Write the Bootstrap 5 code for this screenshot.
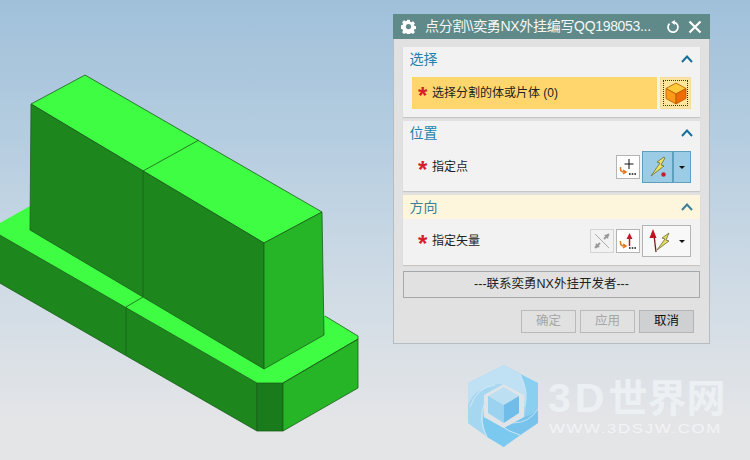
<!doctype html>
<html lang="zh">
<head>
<meta charset="utf-8">
<title>点分割</title>
<link rel="stylesheet" href="https://cdn.jsdelivr.net/npm/bootstrap@5.3.0/dist/css/bootstrap.min.css">
<style>
html,body{margin:0;height:460px;overflow:hidden}
body{font-family:"Liberation Sans","Noto Sans CJK SC",sans-serif;font-size:12px;color:#222}
.desk{position:relative;width:750px;height:460px;overflow:hidden;background:linear-gradient(180deg,#a0c0da 0%,#b5cde0 30%,#cfdbe5 62%,#e4e5e7 92%,#e4e5e7 100%)}
.scene{position:absolute;left:0;top:0}
.mark-logo{position:absolute;left:467px;top:365px}
.mark-big{position:absolute;left:548px;top:376px;font-size:39px;line-height:44px;font-weight:700;color:#edf0f3;white-space:nowrap}
.mark-num{font-size:41px;letter-spacing:4px}
.mark-small{position:absolute;left:549px;top:422px;font-size:12px;line-height:14px;color:#f2f4f6;letter-spacing:1.2px;white-space:nowrap;transform:scaleX(1.4);transform-origin:left center}
.dlg{position:absolute;left:393px;top:14px;width:317px;height:330px;background:#e1e1e1;border:1px solid #b6bcc0;border-top:0}
.dlg-title{height:25px;margin:0 -1px;background:#5f8a89;color:#fff;padding:0 8px}
.dlg-name{font-size:14px;margin-left:9px;flex:1;white-space:nowrap;letter-spacing:-.32px;color:#f4f7f7}
.sect{margin:8px 9px 0;background:#f2f2f2;box-shadow:0 1px 1px #c6c6c6}
.sect+.sect{margin-top:4px}
.sect-head{height:24px;padding:0 7px 0 6.500px;color:#1f83ad;font-size:14px}
.sect-head.cream{background:#fdf6dc;color:#3d7f96}
.row-sel{padding:6px 9px 8px;gap:3px}
.row-hi{background:#ffd66e;height:32px;flex:1;padding-left:7px}
.row-plain{height:46px;padding:0 9px 2px 16px}
.req{color:#d42027;font-size:24px;line-height:17px;font-weight:700;width:13px;display:inline-block;height:13px;margin-left:-1px;margin-right:1px}
.pick{width:31px;height:32px;background:#fbe3a4;border:1px solid #f5dc9c;padding:2px}
.pick-in{width:100%;height:100%;border:1px dotted #333;background:#ffe49a}
.tool{width:24px;height:24px;background:#fff;border:1px solid #b4b4b4;margin-right:2px}
.tool.off{background:#f2f2f2;border-color:#d4d4d4}
.split{height:32px;border:1px solid #b4b4b4;background:#f8f8f8;width:49px}
.split.on{background:#9ccbe6;border-color:#5d9fbd}
.split-l{width:31px;height:100%}
.split.on .split-l{border-right:2px solid #5d9fbd}
.split-r{flex:1;height:100%}
.caret-d{width:0;height:0;border-left:3.5px solid transparent;border-right:3.5px solid transparent;border-top:3.5px solid #111}
.wide{margin:6px 9px 0;height:27px;border:1px solid #a5a8aa;background:#e1e1e1;font-size:12.5px;color:#222;line-height:25px;text-align:center}
.acts{margin:12px 15px 0 0;gap:4px}
.btn.act{width:55px;height:23px;padding:0;border-radius:0;font-size:12.5px;line-height:21px;background:#e1e1e1;border:1px solid #adadad;color:#111}
.btn.act.dim{color:#a6a6a6;border-color:#b9b9b9}
.btn.act.main{background:#cfd0d2;border-color:#b4b5b7}
</style>
</head>
<body>
<div class="desk">
  <svg class="scene" width="390" height="460" viewBox="0 0 390 460">
    <g stroke="#1b5f1b" stroke-width=".8" stroke-linejoin="round">
      <polygon points="-2,224 30,206 143,290 325,316 358,336 358,339 283,383 257,383 -2,235" fill="#3efd42" stroke="none"/>
      <polygon points="-2,234 257,383 257,431 -2,282" fill="#1d861d"/>
      <polygon points="257,383 283,383 283,431 257,431" fill="#1a7b1c"/>
      <polygon points="283,383 358,339 358,388 283,431" fill="#26b526"/>
      <line x1="358" y1="336" x2="358" y2="339"/>
      <line x1="325" y1="316" x2="358" y2="336"/>
      <line x1="283" y1="383" x2="358" y2="339"/>
      <line x1="143" y1="297" x2="126" y2="307"/>
      <line x1="126" y1="307" x2="126" y2="355"/>
      <polygon points="31,104 85,75 322,212 264,243" fill="#3efd42"/>
      <polygon points="31,104 143,171 264,243 264,369 143,297 30,230" fill="#1d861d"/>
      <polygon points="264,243 322,212 324,335 264,369" fill="#26b526"/>
      <line x1="143" y1="171" x2="199" y2="140"/>
      <line x1="143" y1="171" x2="143" y2="297"/>
    </g>
  </svg>

  <svg class="mark-logo" width="72" height="82" viewBox="0 0 72 82">
    <polygon points="36.700,0 71,18 71,58 36.700,82 1,58 1,18" fill="#a8d8f2"/>
    <path d="M1,18L36.700,0L53,9Q62,24 57,40L57,30L36.700,19Q14,18 3,40L1,40Z" fill="#bfe1f3"/>
    <path d="M53,9L71,18L71,46Q62,58 48,58L57,52Q63,30 53,9Z" fill="#8acef0"/>
    <path d="M71,44L71,58L53,70Q42,66 33,60L36.700,63L57,52Q66,50 71,44Z" fill="#78c3ec"/>
    <path d="M53,70L36.700,82L20,72Q14,62 17,48L17,52L36.700,63Q46,68 53,70Z" fill="#7cc9f0"/>
    <path d="M1,40Q8,22 26,23L17,30Q10,45 20,72L1,58Z" fill="#a6d7f1"/>
    <g fill="none" stroke="#e3eff6" stroke-width=".7">
      <path d="M53,9Q63,28 57,42"/><path d="M71,44Q62,58 46,58"/><path d="M53,70Q42,67 33,60"/><path d="M20,72Q11,55 17,40"/><path d="M3,42Q10,22 28,20"/>
    </g>
    <polygon points="36.700,19 57,30 57,52 36.700,63 17,52 17,30" fill="#dfe4e9"/>
    <polygon points="36.700,22 52,31 36.700,40 21,31" fill="#bcdff2"/>
    <polygon points="21,31 36.700,40 36.700,58 21,48" fill="#9bd2ef"/>
    <polygon points="52,31 36.700,40 36.700,58 52,48" fill="#6fbde8"/>
  </svg>
  <div class="mark-big"><span class="mark-num">3D</span>世界网</div>
  <div class="mark-small">WWW.3DSJW.COM</div>

  <div class="dlg">
    <div class="dlg-title d-flex align-items-center">
      <svg width="15" height="15" viewBox="0 0 16 16"><path fill="#fff" fill-rule="evenodd" d="M6.600 1h2.800l.4 2 1.200.6 1.800-1 2 2-1 1.800.5 1.200 2 .4v2.800l-2 .4-.5 1.200 1 1.800-2 2-1.800-1-1.200.5-.4 2H6.600l-.4-2-1.200-.5-1.800 1-2-2 1-1.800-.5-1.200-2-.4V7l2-.4.5-1.200-1-1.800 2-2 1.800 1 1.200-.6zM8 5.400a2.800 2.800 0 1 0 0 5.600 2.800 2.800 0 0 0 0-5.600z" transform="translate(0 -.2)"/></svg>
      <span class="dlg-name">点分割\\奕勇NX外挂编写QQ198053...</span>
      <svg width="14" height="14" viewBox="0 0 14 14" class="me-1"><path d="M3.500 3.600A5 5 0 1 0 8.500 2.400" fill="none" stroke="#fff" stroke-width="1.800"/><polygon points="8.800,0 8.800,5 5.200,2.300" fill="#fff"/></svg>
      <svg width="14" height="14" viewBox="0 0 14 14" class="ms-1"><path d="M1.500 1.500l11 11M12.500 1.500l-11 11" stroke="#fff" stroke-width="2.200"/></svg>
    </div>

    <div class="sect">
      <div class="sect-head d-flex align-items-center justify-content-between">
        <span>选择</span>
        <svg width="12" height="8" viewBox="0 0 12 8"><path d="M1 7l5-5.500L11 7" fill="none" stroke="#176f9b" stroke-width="2"/></svg>
      </div>
      <div class="row-sel d-flex">
        <div class="row-hi d-flex align-items-center"><span class="req">*</span><span>选择分割的体或片体 (0)</span></div>
        <div class="pick"><div class="pick-in d-flex align-items-center justify-content-center">
          <svg width="22" height="23" viewBox="0 0 22 23"><polygon points="11,1 21,6.500 11,12 1,6.500" fill="#ffc93c" stroke="#b25a00" stroke-width=".8"/><polygon points="1,6.500 11,12 11,22 1,16.500" fill="#ff9a18" stroke="#b25a00" stroke-width=".8"/><polygon points="21,6.500 11,12 11,22 21,16.500" fill="#f06c00" stroke="#b25a00" stroke-width=".8"/></svg>
        </div></div>
      </div>
    </div>

    <div class="sect">
      <div class="sect-head d-flex align-items-center justify-content-between">
        <span>位置</span>
        <svg width="12" height="8" viewBox="0 0 12 8"><path d="M1 7l5-5.500L11 7" fill="none" stroke="#176f9b" stroke-width="2"/></svg>
      </div>
      <div class="row-plain d-flex align-items-center">
        <span class="req">*</span><span class="flex-grow-1">指定点</span>
        <div class="tool d-flex align-items-center justify-content-center">
          <svg width="20" height="20" viewBox="0 0 20 20"><path d="M11 2v10M6.500 7h9" stroke="#111" stroke-width="1"/><path d="M2.500 10c-.5 4 1 5.500 5 5M5 13l3 2-3 2" fill="none" stroke="#e2791f" stroke-width="1.500"/><path d="M11 17h1.600M13.700 17h1.600M16.400 17H18" stroke="#111" stroke-width="1.600"/></svg>
        </div>
        <div class="split on d-flex align-items-center">
          <div class="split-l d-flex align-items-center justify-content-center">
            <svg width="24" height="24" viewBox="0 0 24 24"><path d="M18 2l-7 5 3 1-9 13 13-10-3-1 4-7z" fill="#eee25c" stroke="#6b6b3c" stroke-width=".8"/><circle cx="17.500" cy="19.500" r="2.200" fill="#c0202c"/></svg>
          </div>
          <div class="split-r d-flex align-items-center justify-content-center"><span class="caret-d"></span></div>
        </div>
      </div>
    </div>

    <div class="sect">
      <div class="sect-head cream d-flex align-items-center justify-content-between">
        <span>方向</span>
        <svg width="12" height="8" viewBox="0 0 12 8"><path d="M1 7l5-5.500L11 7" fill="none" stroke="#3d7f96" stroke-width="2"/></svg>
      </div>
      <div class="row-plain d-flex align-items-center">
        <span class="req">*</span><span class="flex-grow-1">指定矢量</span>
        <div class="tool off d-flex align-items-center justify-content-center">
          <svg width="20" height="20" viewBox="0 0 20 20"><path d="M3 3l14 14" stroke="#aaa" stroke-width="1"/><path d="M3 17L8 12M12 8l5-5" stroke="#9a9a9a" stroke-width="1.800"/><path d="M17 3l-5 1 4 4zM3 17l1-5 4 4z" fill="#9a9a9a"/></svg>
        </div>
        <div class="tool d-flex align-items-center justify-content-center">
          <svg width="20" height="20" viewBox="0 0 20 20"><path d="M11.500 6v9" stroke="#b01822" stroke-width="1.500"/><path d="M11.500 2l-3 6h6z" fill="#c01c28"/><path d="M2.500 10c-.5 4 1 5.500 5 5M5 13l3 2-3 2" fill="none" stroke="#e2791f" stroke-width="1.500"/><path d="M11 17h1.600M13.700 17h1.600M16.400 17H18" stroke="#111" stroke-width="1.600"/></svg>
        </div>
        <div class="split d-flex align-items-center">
          <div class="split-l d-flex align-items-center justify-content-center">
            <svg width="26" height="26" viewBox="0 0 26 26"><path d="M8 7l2 17" stroke="#7a1a18" stroke-width="1.300"/><path d="M7 1L3.500 10h7z" fill="#c4101c"/><path d="M23 5l-7 5 3 1-8 11 12-9-3-1 3-7z" fill="#e6dc60" stroke="#6b6b3c" stroke-width=".8"/></svg>
          </div>
          <div class="split-r d-flex align-items-center justify-content-center"><span class="caret-d"></span></div>
        </div>
      </div>
    </div>

    <div class="wide">---联系奕勇NX外挂开发者---</div>

    <div class="acts d-flex justify-content-end">
      <button type="button" class="btn act dim">确定</button>
      <button type="button" class="btn act dim">应用</button>
      <button type="button" class="btn act main">取消</button>
    </div>
  </div>
</div>
</body>
</html>
